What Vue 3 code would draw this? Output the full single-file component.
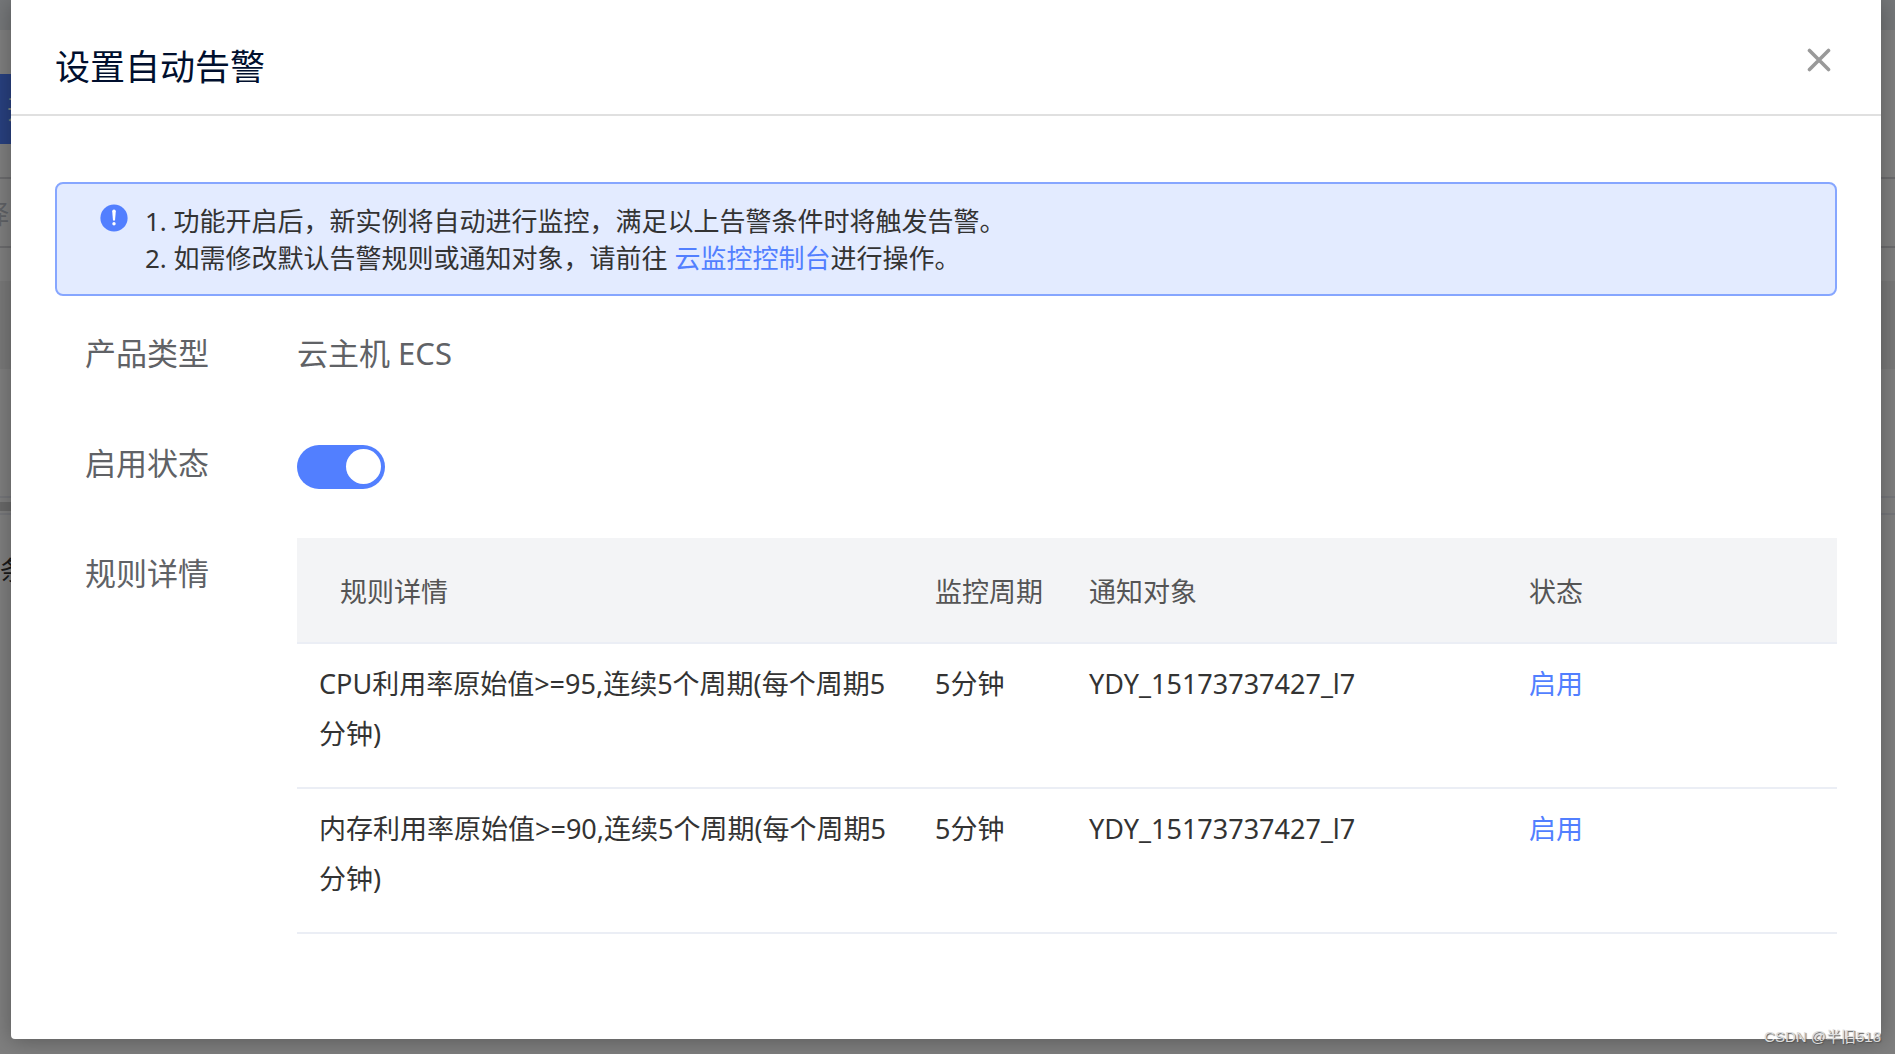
<script setup>
import { ref } from 'vue'

const enabled = ref(true)
const rules = [
  { detail: 'CPU利用率原始值>=95,连续5个周期(每个周期5分钟)', period: '5分钟', target: 'YDY_15173737427_l7', status: '启用' },
  { detail: '内存利用率原始值>=90,连续5个周期(每个周期5分钟)', period: '5分钟', target: 'YDY_15173737427_l7', status: '启用' },
]
</script>

<template>
  <div class="page">
    <div class="backdrop" aria-hidden="true">
      <div class="strip-top"></div>
      <div class="strip-bar"><div class="blue"><span>开</span></div></div>
      <div class="strip-field"><span>择</span></div>
      <div class="strip-gap"></div>
      <div class="strip-head"></div>
      <div class="strip-body"></div>
      <div class="strip-scroll"><div class="thumb"></div></div>
      <div class="strip-foot"><span>条</span></div>
    </div>

    <section class="dialog" role="dialog" aria-labelledby="dialog-title">
      <header class="dialog-header">
        <h1 id="dialog-title">设置自动告警</h1>
        <button class="close" type="button" aria-label="关闭">
          <svg viewBox="0 0 24 24" width="24" height="24" fill="none" stroke="#999" stroke-width="3.6" stroke-linecap="round">
            <path d="M2.5 2.5L21.5 21.5M21.5 2.5L2.5 21.5" />
          </svg>
        </button>
      </header>

      <div class="dialog-body">
        <div class="notice">
          <svg class="notice-icon" viewBox="0 0 28 28" width="28" height="28">
            <circle cx="14" cy="14" r="13.6" fill="#527fff" />
            <path d="M12.2 7.2a1.8 1.8 0 0 1 3.6 0L15 16.4h-2z" fill="#fff" />
            <circle cx="14" cy="19.8" r="1.7" fill="#fff" />
          </svg>
          <div class="notice-text">
            <p>1. 功能开启后，新实例将自动进行监控，满足以上告警条件时将触发告警。</p>
            <p>2. 如需修改默认告警规则或通知对象，请前往 <a href="#">云监控控制台</a>进行操作。</p>
          </div>
        </div>

        <div class="field">
          <span class="label">产品类型</span>
          <span class="value">云主机 ECS</span>
        </div>
        <div class="field">
          <label class="label" for="enabled">启用状态</label>
          <input id="enabled" v-model="enabled" class="switch" type="checkbox" role="switch" />
        </div>
        <div class="field">
          <span class="label">规则详情</span>
          <table class="rules">
            <colgroup>
              <col class="c-detail" />
              <col class="c-period" />
              <col class="c-target" />
              <col />
            </colgroup>
            <thead>
              <tr>
                <th>规则详情</th>
                <th>监控周期</th>
                <th>通知对象</th>
                <th>状态</th>
              </tr>
            </thead>
            <tbody>
              <tr v-for="rule in rules" :key="rule.detail">
                <td>{{ rule.detail }}</td>
                <td>{{ rule.period }}</td>
                <td>{{ rule.target }}</td>
                <td><a href="#">{{ rule.status }}</a></td>
              </tr>
            </tbody>
          </table>
        </div>
      </div>
    </section>

    <div class="watermark">CSDN @半旧518</div>
  </div>
</template>

<style>
body {
  margin: 0;
  background: #7f7f7f;
}
</style>

<style scoped>
.page {
  position: relative;
  box-sizing: border-box;
  min-height: 100vh;
  padding: 0 14px 15px 11px;
  display: flex;
  overflow: hidden;
  font-family: "Noto Sans", "Noto Sans CJK SC", sans-serif;
  font-weight: 400;
  color: #333;
}
.backdrop {
  position: absolute;
  inset: 0;
  font-size: 26px;
  line-height: 36px;
}
.strip-top {
  height: 30px;
  background: #757779;
}
.strip-bar {
  height: 147px;
  padding-top: 44px;
  box-sizing: border-box;
}
.blue {
  width: 120px;
  height: 70px;
  box-sizing: border-box;
  padding: 17px 7px;
  background: #28407f;
  color: #7f7f7f;
}
.strip-field {
  height: 71px;
  box-sizing: border-box;
  border-top: 2px solid #6c6c6e;
  border-bottom: 2px solid #6c6c6e;
  padding-top: 17px;
  color: #606266;
}
.strip-field span {
  margin-left: -17px;
}
.strip-gap {
  height: 33px;
}
.strip-head {
  height: 88px;
  background: #797979;
}
.strip-body {
  height: 127px;
}
.strip-scroll {
  height: 19px;
  box-sizing: border-box;
  border-top: 2px solid #75767a;
  border-bottom: 2px solid #75767a;
  padding-top: 4px;
}
.thumb {
  width: 50%;
  height: 9px;
  background: #696969;
}
.strip-foot {
  padding-top: 37px;
  color: #191919;
}
.dialog {
  position: relative;
  flex: 1;
  background: #fff;
  border-radius: 0 0 4px 4px;
  box-shadow: 0 2px 22px rgba(0, 0, 0, 0.3);
}
.dialog-header {
  display: flex;
  justify-content: space-between;
  align-items: center;
  height: 114px;
  padding: 0 44px;
  border-bottom: 2px solid #e0e0e0;
}
h1 {
  margin: 20px 0 0;
  font-size: 35px;
  line-height: 48px;
  font-weight: 400;
  color: #000f2e;
}
.close {
  display: flex;
  margin-top: 6px;
  padding: 6px;
  border: 0;
  background: none;
}
.dialog-body {
  padding: 66px 44px 88px;
}
.notice {
  display: flex;
  gap: 17px;
  padding: 19px 43px 17px;
  border: 2px solid #86a6ff;
  border-radius: 8px;
  background: #e3ebff;
}
.notice-icon {
  flex: none;
  margin-top: 1px;
}
.notice p {
  margin: 0;
  font-size: 26px;
  line-height: 37px;
}
a {
  color: #527fff;
  text-decoration: none;
}
.field {
  display: flex;
  align-items: flex-start;
  margin-top: 40px;
  padding-left: 30px;
}
.notice + .field {
  margin-top: 22px;
}
.label {
  flex: none;
  width: 212px;
}
.label,
.value {
  font-size: 31px;
  line-height: 70px;
  color: #606266;
}
.switch {
  appearance: none;
  display: flex;
  justify-content: flex-end;
  box-sizing: border-box;
  width: 88px;
  height: 44px;
  margin: 17px 0 0;
  padding: 4px;
  border-radius: 22px;
  background: #527fff;
}
.switch::before {
  content: "";
  width: 35px;
  height: 35px;
  border-radius: 50%;
  background: #fff;
}
.switch:not(:checked) {
  justify-content: flex-start;
  background: #c0c4cc;
}
.rules {
  flex: 1;
  min-width: 0;
  width: 100%;
  table-layout: fixed;
  border-collapse: separate;
  border-spacing: 0;
  font-size: 27px;
  line-height: 50px;
}
.c-detail {
  width: 40%;
}
.c-period {
  width: 10%;
}
.c-target {
  width: 28.57%;
}
th,
td {
  text-align: left;
  vertical-align: top;
  font-weight: 400;
  border-bottom: 2px solid #ebeef5;
}
th {
  padding: 29px 21px 25px 22px;
  background: #f3f4f6;
  color: #555;
}
th:first-child {
  padding-left: 43px;
}
td {
  padding: 15px 22px 28px;
}
.watermark {
  position: absolute;
  right: 14px;
  bottom: 7px;
  font-family: "Liberation Sans", "Noto Sans CJK SC", sans-serif;
  font-size: 15px;
  line-height: 20px;
  color: #ddd;
  text-shadow: 1px 1px 1px #555;
}
</style>
